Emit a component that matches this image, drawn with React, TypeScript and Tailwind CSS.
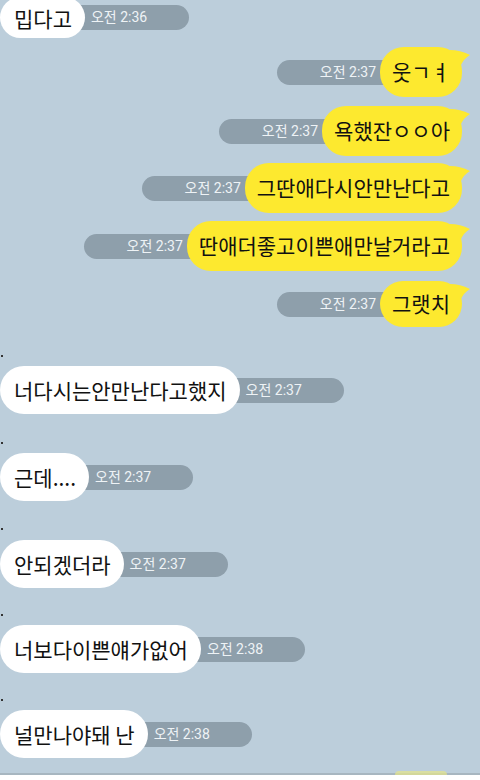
import React from "react";

const FONT = { fontFamily: '"Noto Sans CJK KR", "Noto Sans", sans-serif' };
const TFONT = { fontFamily: 'Roboto, "Noto Sans CJK KR", sans-serif' };

function Tail() {
  return (
    <svg
      className="absolute right-[-8px] top-[2px]"
      width="20"
      height="20"
      viewBox="0 0 20 20"
    >
      <path d="M0 1 Q10 1 20 6 Q14 9 10 18 L0 18 Z" fill="#fde92f" />
    </svg>
  );
}

function Time({ t, side }: { t: string; side: "l" | "r" }) {
  return (
    <div
      className={
        side === "r"
          ? "h-[25px] rounded-full bg-[#8e9fab] flex items-center pl-[43px] pr-[28px] -mr-[24px] text-[14px] text-[#eef3f6] whitespace-nowrap"
          : "h-[25px] rounded-full bg-[#8e9fab] flex items-center pl-[30px] pr-[42px] -ml-[24px] text-[14px] text-[#eef3f6] whitespace-nowrap"
      }
      style={TFONT}
    >
      {t}
    </div>
  );
}

function Right({ text, t, h, cls }: { text: string; t: string; h: string; cls: string }) {
  return (
    <div className={"flex justify-end items-center pr-[18px] " + cls}>
      <Time t={t} side="r" />
      <div
        className={"relative z-10 bg-[#fde92f] rounded-[24px] flex items-center pl-[12px] pr-[12px] text-[21px] text-[#111] whitespace-nowrap " + h}
        style={FONT}
      >
        <Tail />
        <span className="relative">{text}</span>
      </div>
    </div>
  );
}

function Dot({ cls }: { cls: string }) {
  return <div className={"w-[2px] h-[2px] bg-[#333] ml-[1px] " + cls} />;
}

function Left({ text, t, cls, h = "h-[48px]" }: { text: string; t: string; cls: string; h?: string }) {
  return (
    <div className={"flex items-center " + cls}>
      <div
        className={"relative z-10 bg-white rounded-[24px] flex items-center pl-[14px] pr-[13px] text-[21px] leading-[28px] text-[#111] whitespace-nowrap " + h}
        style={FONT}
      >
        {text}
      </div>
      <Time t={t} side="l" />
    </div>
  );
}

export default function App() {
  return (
    <div className="w-[480px] h-[780px] overflow-hidden bg-white flex flex-col">
      <div className="h-[773px] bg-[#bccedb] flex flex-col overflow-hidden">
        <Left text="밉다고" t="오전 2:36" cls="-mt-[3px]" h="h-[41px]" />
        <Right text="웃ㄱㅕ" t="오전 2:37" h="h-[50px]" cls="mt-[9px]" />
        <Right text="욕했잔ㅇㅇ아" t="오전 2:37" h="h-[50px]" cls="mt-[9px]" />
        <Right text="그딴애다시안만난다고" t="오전 2:37" h="h-[50px]" cls="mt-[7px]" />
        <Right text="딴애더좋고이쁜애만날거라고" t="오전 2:37" h="h-[50px]" cls="mt-[8px]" />
        <Right text="그랫치" t="오전 2:37" h="h-[46px]" cls="mt-[10px]" />
        <Dot cls="mt-[28px]" />
        <Left text="너다시는안만난다고했지" t="오전 2:37" cls="mt-[9px]" />
        <Dot cls="mt-[28px]" />
        <Left text="근데...." t="오전 2:37" cls="mt-[9px]" />
        <Dot cls="mt-[27px]" />
        <Left text="안되겠더라" t="오전 2:37" cls="mt-[10px]" />
        <Dot cls="mt-[26px]" />
        <Left text="너보다이쁜얘가없어" t="오전 2:38" cls="mt-[9px]" />
        <Dot cls="mt-[26px]" />
        <Left text="널만나야돼 난" t="오전 2:38" cls="mt-[9px]" />
      </div>
      <div className="h-[2px] bg-[#a7b6c0] relative">
        <div className="absolute left-[395px] top-[-2px] w-[52px] h-[4px] rounded-t-full bg-[#e6e58a] opacity-70" />
      </div>
    </div>
  );
}
